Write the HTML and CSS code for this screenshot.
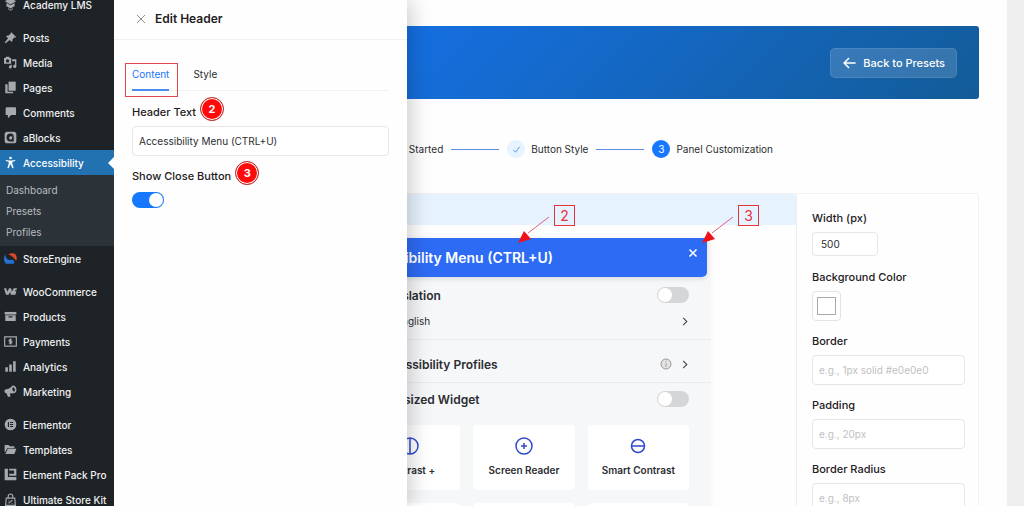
FILE: index.html
```html
<!DOCTYPE html>
<html lang="en">

<head>
    <meta charset="UTF-8">
    <meta name="viewport" content="width=device-width, initial-scale=1.0">
    <title>Accessibility - Panel Customization</title>

    <link rel="stylesheet" href="styles.css">
</head>

<body>

    <div class="admin">
        <nav class="sidebar">
            <ul class="menu">
                <li><a href="#">
                    <svg class="icon" viewBox="0 0 16 16"><path d="M8 0l7 4-7 4-7-4z"/><path d="M3 6l5 3 5-3v4l-5 3-5-3z"/><path d="M5 12l3 2 3-2v2l-3 2-3-2z" opacity=".6"/></svg>
                    Academy LMS</a></li>
                <li class="gap"><a href="#">
                    <svg class="icon" viewBox="0 0 20 20"><path d="M10.4 3l1-1L18.600 9.200l-1 1c-.9-.2-1.800.1-2.500.600l-2.100 2.100c.2 1.500-.1 3-1 4.100l-3.300-3.300L2.500 19 1 17.500l5.300-6.200L3 8c1.200-.8 2.600-1.200 4.100-1l2.100-2.100c.6-.5 1.200-1.200 1.200-1.900z"/></svg>
                    Posts</a></li>
                <li><a href="#">
                    <svg class="icon" viewBox="0 0 20 20"><path fill-rule="evenodd" d="M0 3h2l1-2h5l1 2h2v9H0zm5.500 2a2.500 2.500 0 1 0 0 5 2.500 2.500 0 0 0 0-5z"/><path d="M12.500 5H19v11a2.500 2.500 0 1 1-2-2.400V8h-4.500zM10 13.500h2V17a2.300 2.300 0 1 1-2-2.300z"/></svg>
                    Media</a></li>
                <li><a href="#">
                    <svg class="icon" viewBox="0 0 20 20"><path d="M7 1h11v14H7z"/><path d="M2 5h3.500v11.500H14V19H2z"/></svg>
                    Pages</a></li>
                <li><a href="#">
                    <svg class="icon" viewBox="0 0 20 20"><path d="M4 2h13c1 0 1.500.500 1.500 1.500v9c0 1-.5 1.500-1.500 1.500h-6l-5 5v-5H4c-1 0-1.500-.5-1.500-1.500v-9C2.500 2.500 3 2 4 2z"/></svg>
                    Comments</a></li>
                <li><a href="#">
                    <svg class="icon" viewBox="0 0 20 20"><path fill-rule="evenodd" d="M5 1h10a4 4 0 0 1 4 4v10a4 4 0 0 1-4 4H5a4 4 0 0 1-4-4V5a4 4 0 0 1 4-4zm5 3a6 6 0 1 0 0 12h5v-6a5.500 5.500 0 0 0-5-6zm0 3.500l3 1.500-1 3.500-3 1-1.500-3z"/></svg>
                    aBlocks</a></li>
                <li class="current"><a href="#">
                    <svg class="icon" viewBox="0 0 20 20"><circle cx="10" cy="3" r="2"/><path d="M3 6l5 .8h4L17 6l.3 1.800-4.500 1V12l2 6.500-2 .5-2.400-6h-.8l-2.400 6-2-.5 2-6.500V8.800l-4.500-1z"/></svg>
                    Accessibility</a>
                    <ul class="submenu">
                        <li><a href="#">Dashboard</a></li>
                        <li><a href="#">Presets</a></li>
                        <li><a href="#">Profiles</a></li>
                    </ul>
                </li>
                <li><a href="#">
                    <svg class="icon" viewBox="0 0 20 20"><path fill="#2271d3" d="M2 4c-3 5-3 10 1 14h12c2-3 0-6-3-6-2 0-3 1-5 0-3-1-5-4-5-8z"/><path fill="#d9482b" d="M7 4c3-3 8-3 11 0 2 3 2 7 1 9-2-1-3-3-5-5-2-1-4-3-7-4z"/></svg>
                    StoreEngine</a></li>
                <li class="gap"><a href="#">
                    <svg class="icon" viewBox="0 0 20 20"><path d="M0 5h3.500l1.500 5.500L8 5h3l1 5.500L15 5h5l-1 3h-2l-.5 1.500H19L17.500 15h-7l-1-4.500L7 15H3z"/></svg>
                    WooCommerce</a></li>
                <li><a href="#">
                    <svg class="icon" viewBox="0 0 20 20"><path d="M1 3h18v4H1z"/><path fill-rule="evenodd" d="M2 8h16v9H2zm5 1.500v2h6v-2z"/></svg>
                    Products</a></li>
                <li><a href="#">
                    <svg class="icon" viewBox="0 0 20 20"><path d="M1 3h18v14H1z" fill="none" stroke="currentColor" stroke-width="1.800"/><path d="M12.500 7.500H9a1.200 1.200 0 0 0 0 2.500h2a1.200 1.200 0 0 1 0 2.500H7.500M10 5.500v9" fill="none" stroke="currentColor" stroke-width="1.800"/></svg>
                    Payments</a></li>
                <li><a href="#">
                    <svg class="icon" viewBox="0 0 20 20"><path d="M2 11h4v7H2zM8 7h4v11H8zM14 2h4v16h-4z"/></svg>
                    Analytics</a></li>
                <li><a href="#">
                    <svg class="icon" viewBox="0 0 20 20"><path fill-rule="evenodd" d="M13 1c4-1 7 4 6 8-.5 3-3 4-4.500 3.500L9 13l1 5H6l-2-5c-3-.5-4-3-3-5 .5-1 2-1.500 4-2 3-.5 5-2 8-5zm.5 2.500C12 5 13 9.500 15.500 10.500 18 9 17 4 13.500 3.500z"/></svg>
                    Marketing</a></li>
                <li class="gap"><a href="#">
                    <svg class="icon" viewBox="0 0 20 20"><path fill-rule="evenodd" d="M10 1a9 9 0 1 1 0 18 9 9 0 0 1 0-18zM6 6v8h1.700V6zm3.300 0v1.600H14V6zm0 3.200v1.600H14V9.200zm0 3.200V14H14v-1.600z"/></svg>
                    Elementor</a></li>
                <li><a href="#">
                    <svg class="icon" viewBox="0 0 20 20"><path d="M1 3h6l2 2h7v3H5l-3 6H1z"/><path d="M6 9h13l-3 8H2z"/></svg>
                    Templates</a></li>
                <li><a href="#">
                    <svg class="icon" viewBox="0 0 20 20"><path d="M1 1h5v13h13v5H1z"/><path d="M8 1h11v11H8V9h7.500V4H8z"/></svg>
                    Element Pack Pro</a></li>
                <li><a href="#">
                    <svg class="icon" viewBox="0 0 20 20"><path d="M6.500 8V5a3.500 3.500 0 0 1 7 0v3M3.500 8h13l1 11h-15zM7 16l6-5M12 16h1M7 12h1" fill="none" stroke="currentColor" stroke-width="1.800"/></svg>
                    Ultimate Store Kit</a></li>
            </ul>
        </nav>

        <main class="content">
            <header class="banner">
                <button type="button" class="back">
                    <svg viewBox="0 0 14 12"><path d="M13 6H1.500M6 1.200L1.200 6 6 10.800"/></svg>
                    Back to Presets
                </button>
            </header>

            <ol class="steps">
                <li>
                    <span class="step-mark"><svg viewBox="0 0 10 10"><path d="M1.500 5.500l2.500 2.500L8.500 2"/></svg></span>
                    Getting Started
                </li>
                <li>
                    <span class="step-mark"><svg viewBox="0 0 10 10"><path d="M1.500 5.500l2.500 2.500L8.500 2"/></svg></span>
                    Button Style
                </li>
                <li>
                    <span class="step-mark active">3</span>
                    Panel Customization
                </li>
            </ol>

            <div class="editor">
                <section class="preview">
                    <div class="preview-bar"></div>
                    <div class="widget">
                        <div class="widget-header">
                            <h2>Accessibility Menu (CTRL+U)</h2>
                            <button type="button" class="widget-close" aria-label="Close">
                                <svg viewBox="0 0 10 10"><path d="M1.500 1.500l7 7M8.500 1.500l-7 7"/></svg>
                            </button>
                        </div>
                        <div class="row">
                            <label class="title" for="translation">Translation</label>
                            <input type="checkbox" class="switch" id="translation">
                        </div>
                        <div class="row language">
                            <span>English</span>
                            <svg class="chevron" viewBox="0 0 8 10"><path d="M2 1l4 4-4 4"/></svg>
                        </div>
                        <div class="row profiles">
                            <span class="title">Accessibility Profiles</span>
                            <svg class="info" viewBox="0 0 12 12"><circle cx="6" cy="6" r="5"/><path d="M6 5.300V9M6 3v1.200"/></svg>
                            <svg class="chevron" viewBox="0 0 8 10"><path d="M2 1l4 4-4 4"/></svg>
                        </div>
                        <div class="row oversized">
                            <label class="title" for="oversized">Oversized Widget</label>
                            <input type="checkbox" class="switch" id="oversized">
                        </div>
                        <div class="cards">
                            <button type="button" class="card">
                                <svg viewBox="0 0 20 20"><circle cx="10" cy="10" r="8"/><path d="M10 2v16"/></svg>
                                Contrast +
                            </button>
                            <button type="button" class="card">
                                <svg viewBox="0 0 20 20"><circle cx="10" cy="10" r="8"/><path d="M10 7v6M7 10h6"/></svg>
                                Screen Reader
                            </button>
                            <button type="button" class="card">
                                <svg viewBox="0 0 20 20"><circle cx="10" cy="10" r="6.500"/><path d="M3.500 10h13"/></svg>
                                Smart Contrast
                            </button>
                            <button type="button" class="card" aria-label="Text Size"></button>
                            <button type="button" class="card" aria-label="Line Height"></button>
                            <button type="button" class="card" aria-label="Text Spacing"></button>
                        </div>
                    </div>

                    <!-- callouts -->
                    <span class="callout callout-2">2
                        <svg viewBox="0 0 32 28"><path class="line" d="M31 1L10 17"/><path class="head" d="M0 27l6-12 7 8z"/></svg>
                    </span>
                    <span class="callout callout-3">3
                        <svg viewBox="0 0 32 28"><path class="line" d="M31 1L10 17"/><path class="head" d="M0 27l6-12 7 8z"/></svg>
                    </span>
                </section>

                <form class="settings">
                    <label for="width">Width (px)</label>
                    <input type="text" class="short" id="width" value="500">
                    <label for="background">Background Color</label>
                    <input type="color" id="background" value="#ffffff">
                    <label for="border">Border</label>
                    <input type="text" id="border" placeholder="e.g., 1px solid #e0e0e0">
                    <label for="padding">Padding</label>
                    <input type="text" id="padding" placeholder="e.g., 20px">
                    <label for="radius">Border Radius</label>
                    <input type="text" id="radius" placeholder="e.g., 8px">
                </form>
            </div>
        </main>

        <aside class="drawer">
            <header class="drawer-header">
                <button type="button" class="drawer-close" aria-label="Close">
                    <svg viewBox="0 0 10 10"><path d="M1 1l8 8M9 1L1 9"/></svg>
                </button>
                <h1>Edit Header</h1>
            </header>
            <div class="drawer-body">
                <div class="tabs">
                    <button type="button" class="tab selected">Content</button>
                    <button type="button" class="tab">Style</button>
                </div>
                <div class="field">
                    <label for="header-text">Header Text<span class="badge">2</span></label>
                    <input type="text" id="header-text" value="Accessibility Menu (CTRL+U)">
                </div>
                <div class="field">
                    <label for="show-close">Show Close Button<span class="badge">3</span></label>
                    <input type="checkbox" class="switch" id="show-close" checked>
                </div>
            </div>
        </aside>
    </div>

</body>

</html>
```
FILE: styles.css
```css
* {
    box-sizing: border-box;
}

body {
    margin: 0;
    font-family: Inter, "Liberation Sans", sans-serif;
    font-size: 10px;
    color: #2b2d31;
    background: #efefef;
}

ul,
ol {
    list-style: none;
    margin: 0;
    padding: 0;
}

h1,
h2 {
    margin: 0;
    font-weight: 600;
}

button,
input {
    font-family: inherit;
    font-size: 10px;
    color: inherit;
    margin: 0;
}

button {
    border: none;
    background: none;
    padding: 0;
    cursor: pointer;
}

.admin {
    position: relative;
    display: flex;
    height: 100vh;
    overflow: hidden;
}

/* sidebar */
.sidebar {
    flex: 0 0 114px;
    background: #1d2327;
    overflow: hidden;
}

.menu {
    margin-top: -8px;
}

.menu a {
    display: flex;
    align-items: center;
    gap: 6px;
    height: 25px;
    padding-left: 4px;
    color: #f0f0f1;
    font-weight: 500;
    line-height: 12px;
    text-decoration: none;
    white-space: nowrap;
}

.menu .gap {
    margin-top: 8px;
}

.icon {
    flex: none;
    width: 13px;
    height: 13px;
    fill: currentColor;
    color: #a7aaad;
}

.menu .current > a {
    position: relative;
    background: #2271b1;
    color: #fff;
}

.current .icon {
    color: #fff;
}

.current > a::after {
    content: "";
    position: absolute;
    right: 0;
    border: 6px solid transparent;
    border-left: 0;
    border-right-color: #fff;
}

.submenu {
    padding: 4px 0;
    background: #2c3338;
}

.menu .submenu a {
    height: 21px;
    padding-left: 6px;
    color: #b9bcc0;
    font-weight: 400;
}

/* page */
.content {
    flex: 1;
    min-width: 0;
    margin-right: 17px;
    padding: 26px 28px 0;
    background: #fefefe;
}

.banner {
    display: flex;
    align-items: center;
    justify-content: flex-end;
    height: 73px;
    padding-right: 22px;
    border-radius: 3px;
    background: linear-gradient(135deg, #1677ff, #135c98);
}

.back {
    display: flex;
    align-items: center;
    gap: 7px;
    height: 30px;
    padding: 0 11px 0 12px;
    border: 1px solid rgba(255, 255, 255, 0.1);
    border-radius: 5px;
    background: rgba(255, 255, 255, 0.15);
    color: #fff;
    font-size: 11px;
    font-weight: 500;
}

.back svg {
    width: 13px;
    height: 12px;
    fill: none;
    stroke: #fff;
    stroke-width: 1.700;
    stroke-linecap: round;
    stroke-linejoin: round;
}

.steps {
    display: flex;
    justify-content: center;
    margin: 41px 0 35px;
}

.steps li {
    display: flex;
    align-items: center;
    gap: 6px;
    height: 18px;
    white-space: nowrap;
}

.steps li + li::before {
    content: "";
    width: 48px;
    height: 1px;
    margin: 0 2px 0 8px;
    background: #5d8fe0;
}

.step-mark {
    display: flex;
    align-items: center;
    justify-content: center;
    width: 18px;
    height: 18px;
    border-radius: 50%;
    background: #e6f4ff;
}

.step-mark svg {
    width: 9px;
    height: 9px;
    fill: none;
    stroke: #4c86ea;
}

.step-mark.active {
    background: #1677ff;
    color: #fff;
}

.editor {
    display: flex;
    border: 1px solid #f2f2f3;
    border-radius: 4px;
}

.preview {
    position: relative;
    flex: 1;
    border-right: 1px solid #eeeeef;
}

.preview-bar {
    height: 31px;
    border-top-right-radius: 4px;
    background: #e6f2fe;
}

.widget {
    width: 373px;
    margin: 13px 85px 0 auto;
    padding: 0 22px 20px 21px;
    border-radius: 6px;
    background: #f6f7f9;
    box-shadow: 0 2px 10px rgba(0, 0, 0, 0.03);
}

.widget-header {
    display: flex;
    justify-content: space-between;
    height: 39px;
    margin: 0 -18px 6px -21px;
    padding: 10px 9px 0 17px;
    border-radius: 0 0 5px 5px;
    background: #2d6bf5;
    box-shadow: 0 2px 5px rgba(0, 0, 0, 0.12);
    color: #fff;
}

.widget-header h2 {
    font-size: 14px;
    line-height: 20px;
}

.widget-close {
    width: 10px;
    height: 10px;
}

.widget-close svg,
.drawer-close svg {
    display: block;
    width: 10px;
    height: 10px;
    fill: none;
    stroke: currentColor;
    stroke-width: 1.500;
}

.row {
    display: flex;
    align-items: center;
    justify-content: space-between;
    height: 24px;
    padding-left: 17px;
}

.title {
    font-size: 12px;
    font-weight: 600;
}

.language {
    height: 32px;
    padding: 0 0 4px 37px;
}

.profiles {
    height: 44px;
    margin: 0 -22px 4px -21px;
    padding: 6px 22px 0 38px;
    border-top: 1px solid #e9ebee;
    border-bottom: 1px solid #e9ebee;
}

.oversized {
    margin-bottom: 14px;
}

.chevron {
    width: 8px;
    height: 9px;
    fill: none;
    stroke: #44474c;
    stroke-width: 1.200;
}

.info {
    width: 12px;
    height: 12px;
    margin: 0 9px 0 auto;
    fill: #e4e4e4;
    stroke: #9a9a9a;
}

.switch {
    appearance: none;
    width: 32px;
    height: 16px;
    border-radius: 8px;
    background: #d5d6d8;
    cursor: pointer;
}

.switch::before {
    content: "";
    display: block;
    width: 14px;
    height: 14px;
    margin: 1px;
    border-radius: 50%;
    background: #fff;
}

.switch:checked {
    background: #1677ff;
}

.switch:checked::before {
    margin-left: 17px;
}

.cards {
    display: grid;
    grid-template-columns: repeat(3, 1fr);
    gap: 13px;
}

.card {
    display: flex;
    flex-direction: column;
    align-items: center;
    gap: 8px;
    height: 65px;
    padding-top: 11px;
    border-radius: 4px;
    background: #fff;
    font-weight: 600;
    white-space: nowrap;
}

.card svg {
    width: 20px;
    height: 20px;
    fill: none;
    stroke: #2f49cf;
    stroke-width: 1.500;
}

/* settings column */
.settings {
    display: flex;
    flex-direction: column;
    flex: 0 0 181px;
    padding: 16px 13px 16px 15px;
}

.settings label,
.field label {
    margin-bottom: 6px;
    color: #1f2023;
    font-size: 11px;
    font-weight: 500;
    line-height: 16px;
}

.settings input {
    height: 30px;
    margin-bottom: 12px;
}

input[type="text"] {
    width: 100%;
    height: 30px;
    padding: 0 6px;
    border: 1px solid #e6e6e8;
    border-radius: 4px;
    background: #fff;
}

input::placeholder {
    color: #bfbfbf;
}

.settings .short {
    width: 66px;
    height: 24px;
    margin-bottom: 13px;
    padding: 0 8px;
}

input[type="color"] {
    width: 29px;
    padding: 5px 4px;
    border: 1px solid #e3e3e5;
    border-radius: 4px;
    background: #fff;
}

input[type="color"]::-webkit-color-swatch-wrapper {
    padding: 0;
}

input[type="color"]::-webkit-color-swatch {
    border: 1px solid #aaa;
}

/* numbered boxes with an arrow */
.callout {
    position: absolute;
    top: 11px;
    width: 21px;
    height: 21px;
    border: 1px solid #e5343a;
    color: #e5343a;
    font-size: 14px;
    line-height: 19px;
    text-align: center;
}

.callout-2 {
    right: 221px;
}

.callout-3 {
    right: 37px;
}

.callout svg {
    position: absolute;
    top: 10px;
    right: 24px;
    width: 32px;
    height: 28px;
}

.callout .line {
    stroke: #e0607c;
}

.callout .head {
    fill: #f0101a;
}

/* drawer */
.drawer {
    position: absolute;
    top: 0;
    bottom: 0;
    left: 114px;
    width: 293px;
    background: #fefefe;
    box-shadow: 4px 0 20px rgba(0, 0, 0, 0.2);
    clip-path: inset(0 -30px 0 0);
}

.drawer-header {
    display: flex;
    align-items: center;
    gap: 9px;
    height: 40px;
    padding: 0 22px 2px;
    border-bottom: 1px solid #f1f1f1;
}

.drawer-header h1 {
    color: #1f2023;
    font-size: 12px;
}

.drawer-close {
    color: #8c8c8c;
}

.drawer-close svg {
    stroke-width: 1;
}

.drawer-body {
    padding: 25px 18px;
}

.tabs {
    display: flex;
    gap: 24px;
    margin-bottom: 13px;
    border-bottom: 1px solid #f1f1f1;
}

.tab {
    position: relative;
    padding-bottom: 6px;
    border-bottom: 2px solid transparent;
    margin-bottom: -1px;
    line-height: 18px;
}

.tab.selected {
    color: #1677ff;
    border-bottom-color: #4a8df0;
}

.tab.selected::after {
    content: "";
    position: absolute;
    inset: -2px -9px -8px -7px;
    border: 1px solid #e0474d;
}

.field {
    margin-bottom: 12px;
}

.field label {
    position: relative;
    display: table;
}

.field .switch {
    display: block;
    margin-top: 8px;
}

.badge {
    position: absolute;
    top: -7px;
    left: calc(100% + 4px);
    width: 24px;
    height: 24px;
    border: 1px solid #b43a3a;
    border-radius: 50%;
    background: #fe0a0a;
    box-shadow: inset 0 0 0 1px #fff;
    color: #fff;
    font-size: 11px;
    font-weight: 700;
    line-height: 22px;
    text-align: center;
}
```
